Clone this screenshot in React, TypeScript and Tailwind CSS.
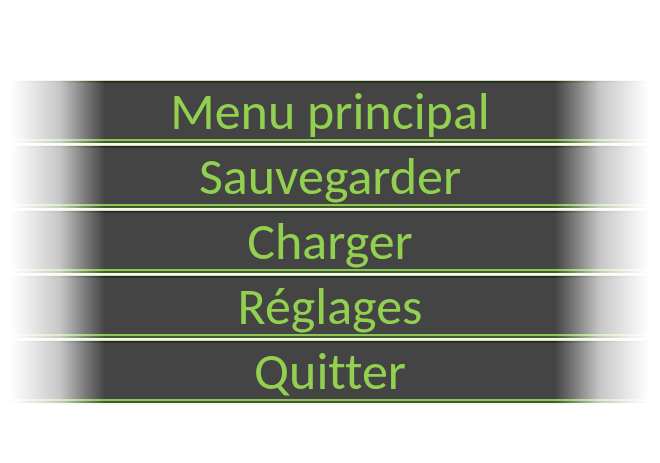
const items = ["Menu principal", "Sauvegarder", "Charger", "Réglages", "Quitter"];

const MenuRow = ({ label }: { label: string }) => {
  return (
    <div className="flex h-[65px] flex-col [mask-image:linear-gradient(to_right,transparent_10px,rgba(0,0,0,0.08)_25px,rgba(0,0,0,0.3)_60px,rgba(0,0,0,0.7)_85px,black_105px,black_555px,rgba(0,0,0,0.7)_575px,rgba(0,0,0,0.3)_600px,rgba(0,0,0,0.08)_635px,transparent_650px)]">
      <div className="h-px bg-[#c9e4a4]" />
      <div className="h-[2px] bg-gradient-to-b from-[#1f1f1f] to-[#363636]" />
      <div className="flex flex-1 items-center justify-center bg-[#444444] pb-[1px] text-[52px] leading-none text-[#92d050] [font-family:Carlito,Calibri,Lato,sans-serif] [font-variant-ligatures:none]">
        {label}
      </div>
      <div className="h-[2px] bg-[#8fc45a]" />
      <div className="h-[2px] bg-[#3f5e26]" />
      <div className="h-[2px] bg-[#f4f8ee]" />
    </div>
  );
};

export default function App() {
  return (
    <div className="h-[463px] w-[660px] bg-white pt-[80px]">
      {items.map((label) => (
        <MenuRow key={label} label={label} />
      ))}
    </div>
  );
}
